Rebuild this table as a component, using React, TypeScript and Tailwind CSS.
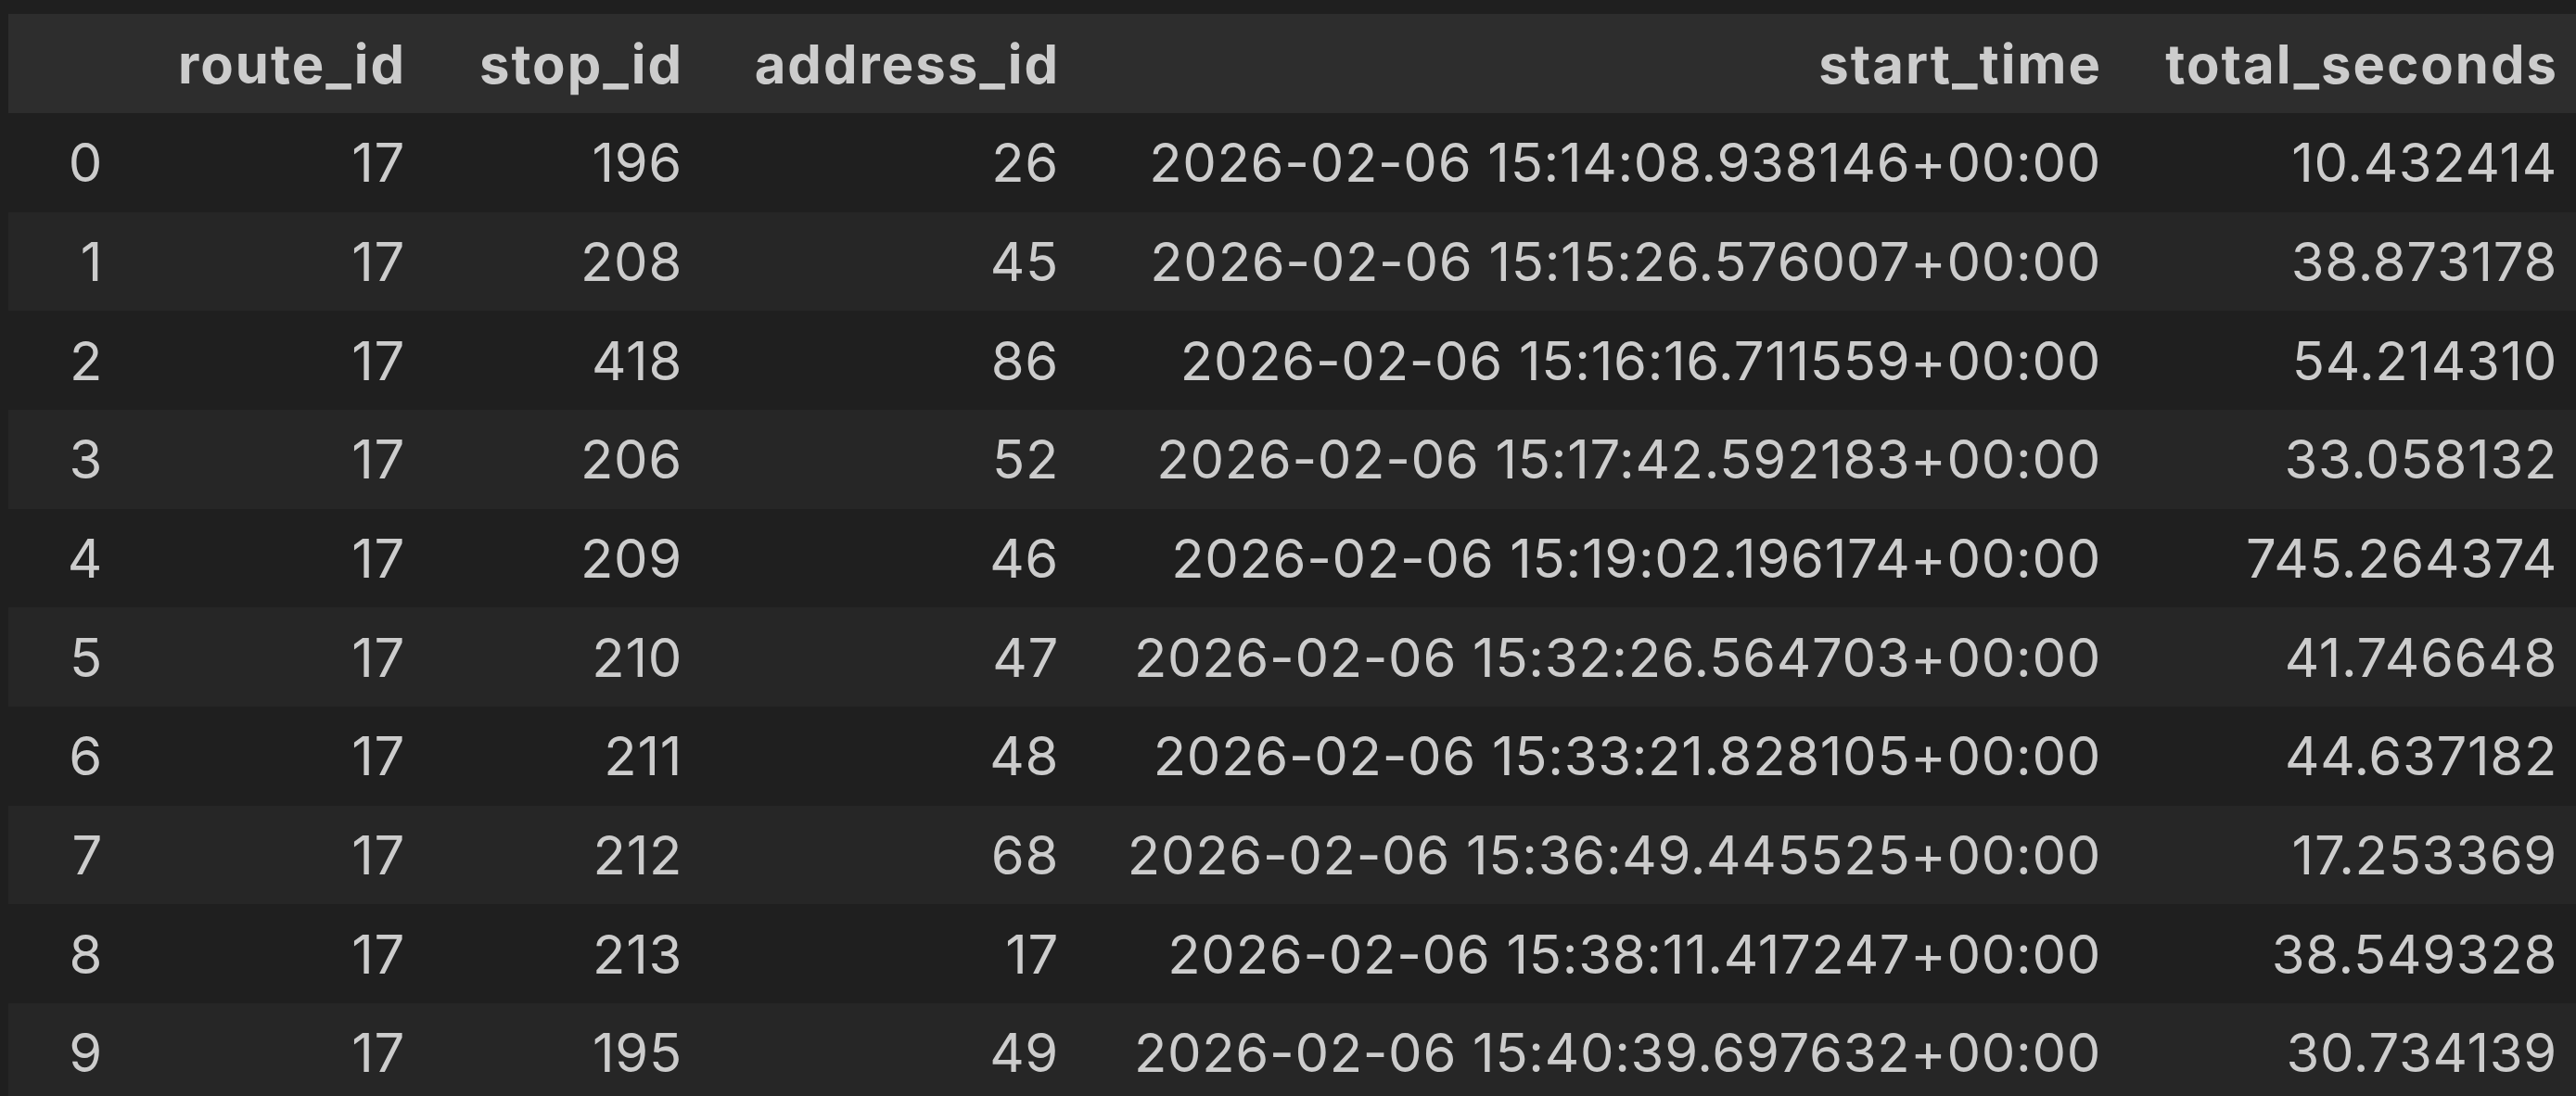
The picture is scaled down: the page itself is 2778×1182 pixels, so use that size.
import React from 'react';

const headers = ['', 'route_id', 'stop_id', 'address_id', 'start_time', 'total_seconds'];

const rows: string[][] = [
  ['0', '17', '196', '26', '2026-02-06 15:14:08.938146+00:00', '10.432414'],
  ['1', '17', '208', '45', '2026-02-06 15:15:26.576007+00:00', '38.873178'],
  ['2', '17', '418', '86', '2026-02-06 15:16:16.711559+00:00', '54.214310'],
  ['3', '17', '206', '52', '2026-02-06 15:17:42.592183+00:00', '33.058132'],
  ['4', '17', '209', '46', '2026-02-06 15:19:02.196174+00:00', '745.264374'],
  ['5', '17', '210', '47', '2026-02-06 15:32:26.564703+00:00', '41.746648'],
  ['6', '17', '211', '48', '2026-02-06 15:33:21.828105+00:00', '44.637182'],
  ['7', '17', '212', '68', '2026-02-06 15:36:49.445525+00:00', '17.253369'],
  ['8', '17', '213', '17', '2026-02-06 15:38:11.417247+00:00', '38.549328'],
  ['9', '17', '195', '49', '2026-02-06 15:40:39.697632+00:00', '30.734139'],
];

// column widths picked so the right-aligned text lands where the notebook output had it
const gridCols = 'grid grid-cols-[115px_326px_299px_406px_1124px_1fr]';

function Cell({ text, last, bold }: { text: string; last: boolean; bold?: boolean }) {
  // letter-spacing also trails the last glyph, so padding is trimmed by the same amount
  return (
    <div
      className={`flex items-center justify-end whitespace-nowrap ${
        bold
          ? `font-bold tracking-[2px] ${last ? 'pr-[19px]' : 'pr-[12px]'}`
          : `font-normal tracking-[0.7px] ${last ? 'pr-[20px]' : 'pr-[13px]'}`
      }`}
    >
      {text}
    </div>
  );
}

export default function App() {
  return (
    <div
      className="w-[2778px] h-[1182px] overflow-hidden bg-[#1f1f1f] pt-[15px] pl-[9px] text-[#cccccc] text-[58px] leading-none"
      style={{ fontFamily: 'Inter, "Liberation Sans", Arial, sans-serif' }}
    >
      <div className="flex flex-col">
        <div className={`${gridCols} h-[107px] bg-[#2d2d2d]`}>
          {headers.map((h, i) => (
            <Cell key={i} text={h} last={i === headers.length - 1} bold />
          ))}
        </div>

        {rows.map((row, r) => (
          <div
            key={r}
            className={`${gridCols} h-[106.67px] ${r % 2 === 0 ? 'bg-[#1f1f1f]' : 'bg-[#262626]'}`}
          >
            {row.map((v, i) => (
              <Cell key={i} text={v} last={i === row.length - 1} />
            ))}
          </div>
        ))}
      </div>
    </div>
  );
}
